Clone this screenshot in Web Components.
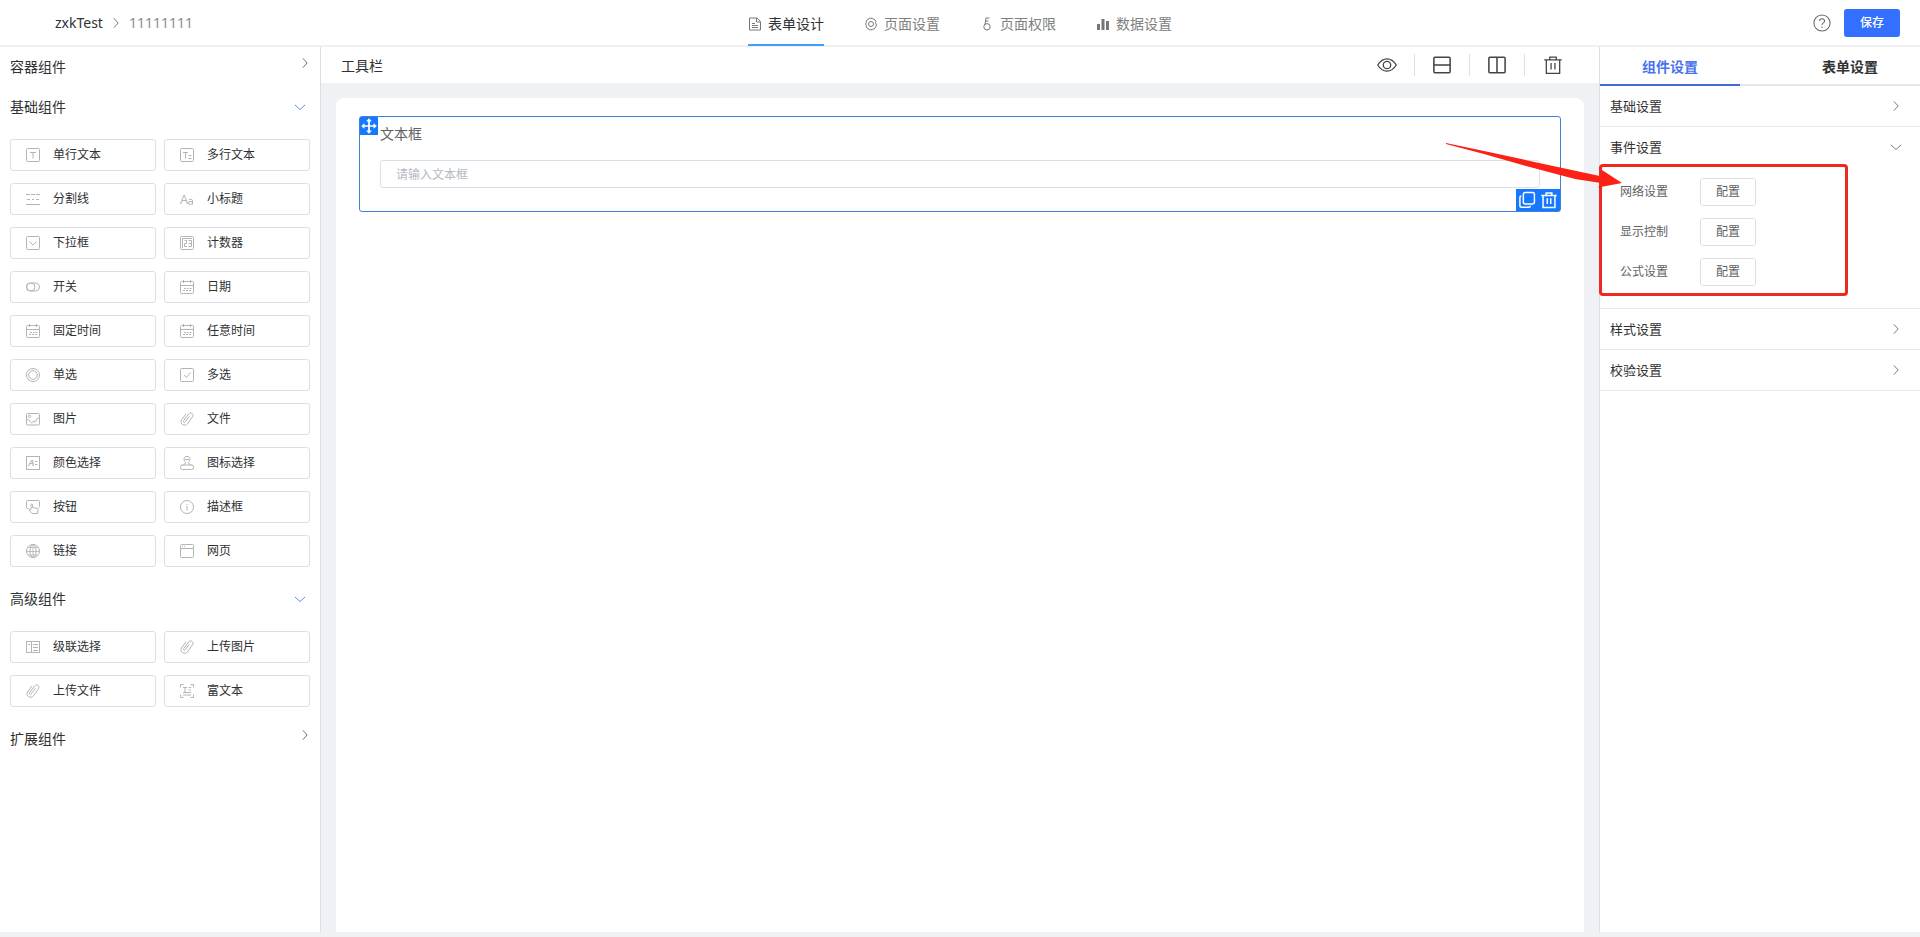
<!DOCTYPE html>
<html lang="zh-CN">
<head>
<meta charset="utf-8">
<title>表单设计</title>
<style>
html, body { margin: 0; }
body {
  font-family: "Noto Sans", "Noto Sans CJK SC", sans-serif;
  font-size: 14px; line-height: 20px; color: #303133; background: #f0f1f4;
}
</style>
</head>
<body>
<form-designer></form-designer>
<script>
const ICONS = {
  text: '<rect x=".5" y=".5" width="13" height="13" rx="1"/><path d="M4 4.500h6M7 4.500v6"/>',
  textarea: '<rect x=".5" y=".5" width="13" height="13" rx="1"/><path d="M3 4.500h5M5.500 4.500v6M8.500 7.500h3M8.500 10.500h3"/>',
  divider: '<path d="M0 2.500h4M5 2.500h4M10 2.500h4M1 7.500h3M6 7.500h2M10 7.500h3M0 12.500h14"/>',
  heading: '<text x="0" y="12" font-size="12" font-family="Liberation Sans" fill="currentColor" stroke="none">A</text><path d="M9 7.500q3.500-1 3.500 1V12.500M12.500 9.500H10q-1.500 0-1.500 1.500t1.500 1.500 2.500-1.500"/>',
  select: '<rect x=".5" y=".5" width="13" height="13" rx="1"/><path d="M3.500 5.500 7 9l3.500-3.500"/>',
  counter: '<rect x=".5" y=".5" width="13" height="13" rx="1"/><path d="M2.500 12V2.500H12M4.500 4.500h2v3h-2v3h2.500M8.500 4.500h3v6h-3M8.500 7.500h3"/>',
  toggle: '<rect x=".5" y="3" width="13" height="8" rx="4"/><rect x=".5" y="3" width="8.500" height="8" rx="4"/>',
  date: '<rect x=".5" y="1.500" width="13" height="12" rx="1"/><path d="M.5 5.500h13M3.500 0v3M10.500 0v3M4 8.500h2M7 8.500h1.500M9.500 8.500h2M3 10.500h2M6 10.500h2M9 10.500h2"/>',
  radio: '<circle cx="7" cy="7" r="6.500"/><circle cx="7" cy="7" r="4.300"/>',
  check: '<rect x=".5" y=".5" width="13" height="13" rx="1"/><path d="m4 7 2.500 2.500L10.500 4.500"/>',
  image: '<rect x=".5" y="1.500" width="13" height="11.500" rx="1"/><circle cx="3.500" cy="4.500" r="1.200"/><path d="m.5 8.500 2-1 3 3.500 2.500-2 1.500 1 1.500-3.500 2.500-1"/>',
  clip: '<path d="M9.300 4.300 5.300 9.800c-.8 1.200-2.500.2-1.600-1.100L8.500 2c2-2.600 5.800-.1 4 2.800l-5 7C5 15-.8 12.200 1.500 8L6 1.800"/>',
  color: '<rect x=".5" y=".5" width="13" height="13"/><text x="2" y="10" font-size="9" font-style="italic" font-weight="bold" font-family="Liberation Sans" fill="currentColor" stroke="none">A</text><path d="M9 5.500h2.500M9 8.500h2.500"/>',
  stamp: '<path d="M5.500 6a3 3 0 1 1 3 0c0 2 1 2.500 3 3M5.500 6C5.500 8 4.500 8.500 2.500 9M5 3.500h4"/><rect x=".5" y="9" width="13" height="4.500" rx="2"/>',
  press: '<path d="M3 8.500H1.500q-1 0-1-1v-6q0-1 1-1h11q1 0 1 1v5q0 1-1 1.500M5 9.500V4.500q1-1 1.500 0v3l5 1q.8.3.5 1.500l-.5 3.500H6L3 10q.5-1.200 2-.5"/>',
  info: '<circle cx="7" cy="7" r="6.500"/><path d="M7 4v1M7 6v4.500"/>',
  globe: '<circle cx="7" cy="7" r="6.500"/><ellipse cx="7" cy="7" rx="3" ry="6.500"/><path d="M7 .5v13M.5 7.500h13M2 3.500h10M2 11h10" stroke-width=".8"/>',
  web: '<rect x=".5" y=".5" width="13" height="13" rx="1"/><path d="M.5 4.500h13M2 2.500h1M4 2.500h1"/>',
  cascade: '<rect x=".5" y="1.500" width="13" height="11"/><path d="M2 4.500h2M5.500 1.500v11M7 4.500h5M7 7.500h5M7 10.500h5"/>',
  rich: '<path d="M.5 3.500v-3h3M10.500.5h3v3M13.500 10.500v3h-3M3.500 13.500h-3v-3M3 3.500h4M5 3.500V8M8.500 3.500H11M8.500 6h2.500M3 8.500h8M3 11h8"/>',
  right: '<path d="m4.500 1.500 5 5.500-5 5.500"/>',
  down: '<path d="m1 4.500 6 5.500 6-5.500"/>',
  doc: '<path d="M1.500 1h7.500l3.500 3.500V13h-11zM8.500 1v4h4M4 6.500h3M4 8.500h6M4 10.500h6"/>',
  gear: '<path d="M3.800 2.200Q5 2.500 5.500 1.200h3Q9 2.500 10.200 2.200L11 3l1 1.800q-1 .7 0 2.200 1 .7 0 2.200L11 11l-.8.800Q9 11.500 8.500 12.800h-3Q5 11.500 3.800 11.800L3 11 2 9.200Q3 8.500 1.500 7 3 5.500 2 4.800L3 3z"/><circle cx="7" cy="7" r="2.500"/>',
  key: '<circle cx="7" cy="9.800" r="3.200"/><path d="M5 7.500 6 1H9.500M5.500 4H8.500"/>',
  bars: '<path fill="currentColor" stroke="none" d="M1 7h3v6H1zM5.500 2h3v11h-3zM10 4h3v9h-3z"/>',
  help: '<circle cx="7" cy="7" r="6.300"/><path d="M5 5.500c0-2.500 4-2.500 4 0C9 7 7 6.800 7 8.500M7 9.800v1"/>',
  eye: '<path d="M-.2 7C3.800.6 10.200.6 14.200 7 10.200 13.400 3.800 13.400-.2 7z"/><circle cx="7" cy="7" r="2.900"/>',
  rows: '<rect x=".7" y="1" width="12.600" height="12" rx=".8"/><path d="M.5 7h13"/>',
  columns: '<rect x=".7" y="1" width="12.600" height="12" rx=".8"/><path d="M7 1v12"/>',
  trash: '<path d="M.2 3h13.600M4.500 3V.8h5V3M1.800 3v10.500h10.400V3M5.500 5.500v5M8.500 5.500v5"/>',
  copy: '<rect x="3.800" y=".5" width="9.700" height="10" rx="1.500"/><path d="M2 3.500c-1 0-1.200.7-1.200 1.500v7c0 .8.400 1.300 1.200 1.300h6.500c1 0 1.500-.5 1.500-1.300"/>',
  move: '<path d="M7 2v10M2 7h10"/><path fill="currentColor" d="M7 .5 5 2.800h4zM7 13.500 5 11.200h4zM.5 7 2.800 5v4zM13.500 7 11.200 5v4z" stroke-width=".5"/>'
};

const define = (name, css, html) => customElements.define(name, class extends HTMLElement {
  connectedCallback() {
    if (this.shadowRoot) return;
    const t = document.createElement('template');
    t.innerHTML = `<style>*{box-sizing:border-box}button,input{font:inherit;color:inherit;margin:0}button{cursor:pointer}${css}</style>` +
      (typeof html === 'function' ? html(this) : html);
    this.attachShadow({ mode: 'open' }).append(t.content.cloneNode(true));
  }
});

define('ui-icon',
  ':host{display:block;flex:none;width:var(--icon-size,14px);height:var(--icon-size,14px)}svg{display:block;width:100%;height:100%;overflow:visible}',
  el => `<svg viewBox="0 0 14 14" fill="none" stroke="currentColor" stroke-width="${el.getAttribute('weight') || 1}" aria-hidden="true">${ICONS[el.getAttribute('name')]}</svg>`);

define('nav-tab', `
  :host{display:flex;color:#808080}
  :host([active]){color:#303133}
  a{display:flex;align-items:center;gap:6px;padding-top:4px;color:inherit;text-decoration:none;border-bottom:2px solid transparent}
  :host([active]) a{border-color:#409eff}
  ui-icon{color:#777}
`, el => `<a href="#"><ui-icon name="${el.getAttribute('icon')}"></ui-icon><slot></slot></a>`);

define('app-header', `
  :host{display:grid;grid-template-columns:1fr auto 1fr;height:47px;background:#fff;border-bottom:2px solid #f0f0f0}
  :host{box-sizing:border-box}
  .crumbs{display:flex;align-items:center;gap:7px;padding-left:55px}
  .crumbs ui-icon{--icon-size:12px;color:#666}
  .crumbs a{color:inherit;text-decoration:none}
  .crumbs span{color:#8c8c8c}
  nav.tabs{display:flex;gap:40px;height:46px}
  .actions{display:flex;align-items:center;justify-content:flex-end;gap:13px;padding-right:20px}
  .help{display:flex;padding:0;border:0;background:none;color:#666;--icon-size:18px}
  .save{width:56px;height:28px;padding:0;border:0;border-radius:3px;background:#3370ff;color:#fff;font-size:12px;font-weight:500}
`, `
  <nav class="crumbs"><a href="#">zxkTest</a><ui-icon name="right"></ui-icon><span>11111111</span></nav>
  <nav class="tabs">
    <nav-tab icon="doc" active>表单设计</nav-tab><nav-tab icon="gear">页面设置</nav-tab>
    <nav-tab icon="key">页面权限</nav-tab><nav-tab icon="bars">数据设置</nav-tab>
  </nav>
  <div class="actions"><button class="help" aria-label="帮助"><ui-icon name="help" weight=".8"></ui-icon></button><button class="save">保存</button></div>
`);

define('palette-item', `
  :host{display:block}
  button{display:flex;align-items:center;gap:13px;width:100%;height:32px;padding:0 15px;background:#fff;border:1px solid #dcdfe6;border-radius:3px;font-size:12px;line-height:18px}
  ui-icon{color:#b4b4b4}
`, el => `<button><ui-icon name="${el.getAttribute('icon')}"></ui-icon><slot></slot></button>`);

define('palette-group', `
  :host{display:block;padding:0 10px}
  .head{display:flex;align-items:center;justify-content:space-between;width:100%;height:40px;padding:0;border:0;background:none}
  .head ui-icon{--icon-size:12px;color:#555}
  :host(:not([open])) ui-icon{margin-bottom:8px;margin-right:-1px}
  :host([open]) .head ui-icon{color:#4a72ee;margin-right:4px}
  .items{display:grid;grid-template-columns:1fr 1fr;gap:12px 8px;padding:12px 0}
  :host(:not([open])) .items{display:none}
`, el => `<button class="head">${el.getAttribute('label')}<ui-icon name="${el.hasAttribute('open') ? 'down' : 'right'}"></ui-icon></button><div class="items"><slot></slot></div>`);

const items = list => list.map(([icon, label]) => `<palette-item icon="${icon}">${label}</palette-item>`).join('');
define('component-palette', ':host{display:block;background:#fff;border-right:1px solid #dcdfe6}', `
  <palette-group label="容器组件"></palette-group>
  <palette-group label="基础组件" open>${items([
    ['text', '单行文本'], ['textarea', '多行文本'], ['divider', '分割线'], ['heading', '小标题'],
    ['select', '下拉框'], ['counter', '计数器'], ['toggle', '开关'], ['date', '日期'],
    ['date', '固定时间'], ['date', '任意时间'], ['radio', '单选'], ['check', '多选'],
    ['image', '图片'], ['clip', '文件'], ['color', '颜色选择'], ['stamp', '图标选择'],
    ['press', '按钮'], ['info', '描述框'], ['globe', '链接'], ['web', '网页']])}</palette-group>
  <palette-group label="高级组件" open>${items([
    ['cascade', '级联选择'], ['clip', '上传图片'], ['clip', '上传文件'], ['rich', '富文本']])}</palette-group>
  <palette-group label="扩展组件"></palette-group>
`);

define('tool-bar', `
  :host{display:flex;align-items:center;justify-content:space-between;height:36px;padding:0 19px 0 20px;background:#fff}
  :host{box-sizing:border-box;padding-top:1px}
  .tools{display:flex;align-items:center;--icon-size:18px;color:#444;padding-bottom:1px}
  button{display:flex;justify-content:center;width:55px;padding:2px 0;border:0;border-right:1px solid #dcdfe6;background:none}
  button:last-child{border:0}
`, `<span>工具栏</span><div class="tools">
  <button aria-label="预览"><ui-icon name="eye" weight="1"></ui-icon></button>
  <button aria-label="行布局"><ui-icon name="rows" weight="1.200"></ui-icon></button>
  <button aria-label="列布局"><ui-icon name="columns" weight="1.200"></ui-icon></button>
  <button aria-label="清空"><ui-icon name="trash"></ui-icon></button></div>`);

define('form-field', `
  :host{display:block;box-sizing:border-box;position:relative;height:96px;padding:7px 20px;border:1px solid #3f83d6;border-radius:3px;color:#606266}
  label{display:block;line-height:20px}
  input{display:block;width:100%;height:28px;margin-top:16px;padding:0 15px;border:1px solid #dcdfe6;border-radius:3px;font-size:12px;background:#fff}
  input::placeholder{color:#b4b9c4;opacity:1}
  .move,.acts{position:absolute;background:#1677ff;color:#fff}
  .move{left:0;top:0;padding:1px;--icon-size:16px}
  .acts{right:0;bottom:0;display:flex;gap:6px;padding:3px;--icon-size:16px}
  .acts button{padding:0;border:0;background:none}
`, `<label for="f">文本框</label><input id="f" placeholder="请输入文本框">
  <span class="move"><ui-icon name="move" weight="1.500"></ui-icon></span>
  <div class="acts"><button aria-label="复制"><ui-icon name="copy" weight="1.300"></ui-icon></button><button aria-label="删除"><ui-icon name="trash" weight="1.300"></ui-icon></button></div>`);

define('design-canvas', `
  :host{display:flex;flex-direction:column;min-width:0}
  .sheet{flex:1;margin:15px 15px 0;padding:18px 23px;background:#fff;border-radius:8px 8px 0 0}
`, '<tool-bar></tool-bar><div class="sheet"><form-field></form-field></div>');

define('config-row', `
  :host{display:grid;grid-template-columns:80px auto;justify-content:start;align-items:center;font-size:12px;color:#606266}
  button{width:56px;height:28px;padding:0;border:1px solid #dcdfe6;border-radius:3px;background:#fff}
`, '<span id="n"><slot></slot></span><button aria-describedby="n">配置</button>');

define('settings-section', `
  :host{display:block;border-bottom:1px solid #e6e8eb;position:relative}
  .head{display:flex;align-items:center;justify-content:space-between;width:100%;height:40px;padding:0 18px 0 10px;border:0;background:none;font-size:13px}
  ui-icon{--icon-size:12px;color:#666}
  .body{display:grid;gap:12px;padding:11px 20px 22px}
  :host(:not([open])) .body{display:none}
`, el => `<button class="head">${el.getAttribute('label')}<ui-icon name="${el.hasAttribute('open') ? 'down' : 'right'}"></ui-icon></button><div class="body"><slot></slot></div>`);

define('callout-mark', `
  :host{position:absolute;box-sizing:border-box;left:-1px;top:37px;width:249px;height:132px;border:3px solid #ee2a20;border-radius:4px;pointer-events:none}
  svg{position:absolute;left:-156px;top:-24px;width:180px;height:52px}
`, '<svg viewBox="0 0 180 52" fill="#fb2116" aria-hidden="true"><path d="M0 0 38 8 156 33.500 156 27 176 40 152 44.500 155 40 129 36 80 23 38 11 0 1z"/></svg>');

define('settings-panel', `
  :host{display:block;background:#fff;border-left:1px solid #dcdfe6;position:relative;z-index:1}
  .tabs{display:flex;justify-content:space-between;height:39px;border-bottom:2px solid #e4e7ed}
  .tabs button{width:140px;height:39px;padding:2px 0 0;border:0;border-bottom:2px solid transparent;background:none;font-weight:700}
  .tabs [aria-selected=true]{color:#4a72ee;border-color:#3f6fcb}
`, `
  <div class="tabs" role="tablist"><button role="tab" aria-selected="true">组件设置</button><button role="tab" aria-selected="false">表单设置</button></div>
  <settings-section label="基础设置"></settings-section>
  <settings-section label="事件设置" open>
    <config-row>网络设置</config-row><config-row>显示控制</config-row><config-row>公式设置</config-row>
    <callout-mark></callout-mark>
  </settings-section>
  <settings-section label="样式设置"></settings-section>
  <settings-section label="校验设置"></settings-section>
`);

define('form-designer', `
  :host{display:flex;flex-direction:column;min-height:100vh;box-sizing:border-box;padding-bottom:5px}
  main{flex:1;display:grid;grid-template-columns:321px minmax(0,1fr) 321px}
`, '<app-header></app-header><main><component-palette></component-palette><design-canvas></design-canvas><settings-panel></settings-panel></main>');
</script>
</body>
</html>
